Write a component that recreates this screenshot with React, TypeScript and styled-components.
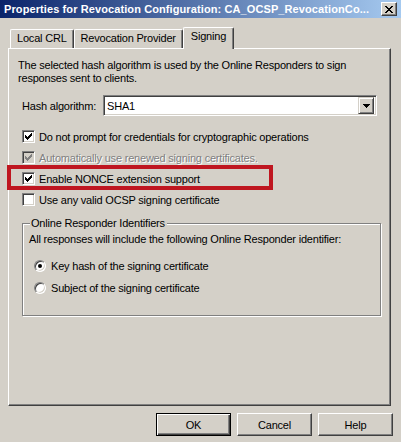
import React from 'react';
import styled, { createGlobalStyle } from 'styled-components';

const GlobalStyle = createGlobalStyle`
    html, body {
        margin: 0;
        padding: 0;
        background: #d4d0c8;
    }
    body {
        font-family: "Liberation Sans", Arial, sans-serif;
        font-size: 11px;
        letter-spacing: -0.2px;
        color: #000;
    }
`;

const CHECK_PIXELS = [
    [6, 0], [5, 1], [6, 1], [0, 2], [4, 2], [5, 2], [6, 2],
    [0, 3], [1, 3], [3, 3], [4, 3], [5, 3],
    [0, 4], [1, 4], [2, 4], [3, 4], [4, 4],
    [1, 5], [2, 5], [3, 5], [2, 6],
];

function CheckMark({ color }: { color: string }) {
    return (
        <svg width="7" height="7" viewBox="0 0 7 7" shapeRendering="crispEdges">
            {CHECK_PIXELS.map(([x, y]) => (
                <rect key={`${x}-${y}`} x={x} y={y} width="1" height="1" fill={color} />
            ))}
        </svg>
    );
}

const Window = styled.div`
    width: 401px;
    height: 442px;
    background: #d4d0c8;
    overflow: hidden;
    display: flex;
    flex-direction: column;
`;

const TitleBar = styled.div`
    height: 18px;
    flex-shrink: 0;
    display: flex;
    align-items: center;
    justify-content: space-between;
    padding: 0 4px 0 4px;
    background: linear-gradient(to right, #0a246a, #a6caf0);
`;

const TitleText = styled.span`
    color: #fff;
    font-weight: bold;
    font-size: 11px;
    letter-spacing: 0.1px;
    white-space: nowrap;
`;

const CloseButton = styled.div`
    width: 16px;
    height: 14px;
    box-sizing: border-box;
    background: #d4d0c8;
    border: 1px solid;
    border-color: #fff #404040 #404040 #fff;
    box-shadow: inset -1px -1px 0 #808080;
    display: flex;
    align-items: center;
    justify-content: center;
`;

const Body = styled.div`
    padding: 9px 8px 0 8px;
    display: flex;
    flex-direction: column;
`;

const TabStrip = styled.div`
    display: flex;
    align-items: flex-end;
    padding-left: 2px;
    height: 21px;
`;

const Tab = styled.div<{ $active?: boolean }>`
    box-sizing: border-box;
    height: ${p => (p.$active ? '22px' : '19px')};
    padding: 0 ${p => (p.$active ? '7px' : '6px')};
    padding-top: 2px;
    border-top: 1px solid #fff;
    border-left: 1px solid #fff;
    border-right: 1px solid #404040;
    box-shadow: inset -1px 0 0 #808080;
    border-radius: 2px 2px 0 0;
    background: #d4d0c8;
    white-space: nowrap;
    position: ${p => (p.$active ? 'relative' : 'static')};
    z-index: ${p => (p.$active ? 1 : 0)};
    margin-bottom: ${p => (p.$active ? '-1px' : '0')};
`;

const Panel = styled.div`
    box-sizing: border-box;
    width: 383px;
    height: 358px;
    border: 1px solid;
    border-color: #fff #404040 #404040 #fff;
    box-shadow: inset -1px -1px 0 #808080;
    padding: 10px 0 0 9px;
    display: flex;
    flex-direction: column;
`;

const Description = styled.p`
    margin: 0;
    line-height: 13px;
    width: 345px;
`;

const HashRow = styled.div`
    display: flex;
    align-items: center;
    margin-top: 10px;
    padding-left: 4px;
`;

const Label = styled.span`
    width: 81px;
`;

const Combo = styled.div`
    box-sizing: border-box;
    width: 274px;
    height: 21px;
    border: 1px solid;
    border-color: #808080 #fff #fff #808080;
    box-shadow: inset 1px 1px 0 #404040, inset -1px -1px 0 #d4d0c8;
    background: #fff;
    display: flex;
    align-items: center;
    justify-content: space-between;
    padding: 0 2px 0 3px;
`;

const DropButton = styled.div`
    box-sizing: border-box;
    width: 16px;
    height: 17px;
    background: #d4d0c8;
    border: 1px solid;
    border-color: #d4d0c8 #404040 #404040 #d4d0c8;
    box-shadow: inset 1px 1px 0 #fff, inset -1px -1px 0 #808080;
    display: flex;
    align-items: center;
    justify-content: center;
`;

const Options = styled.div`
    display: flex;
    flex-direction: column;
    gap: 8px;
    margin-top: 14px;
    padding-left: 4px;
`;

const OptionRow = styled.label`
    display: flex;
    align-items: center;
    gap: 4px;
    height: 13px;
    position: relative;
`;

const Box = styled.span<{ $disabled?: boolean }>`
    box-sizing: border-box;
    width: 13px;
    height: 13px;
    flex-shrink: 0;
    border: 1px solid;
    border-color: #808080 #fff #fff #808080;
    box-shadow: inset 1px 1px 0 #404040, inset -1px -1px 0 #d4d0c8;
    background: ${p => (p.$disabled ? '#d4d0c8' : '#fff')};
    display: flex;
    align-items: center;
    justify-content: center;
`;

const OptionText = styled.span<{ $disabled?: boolean }>`
    white-space: nowrap;
    color: ${p => (p.$disabled ? '#808080' : '#000')};
    text-shadow: ${p => (p.$disabled ? '1px 1px 0 #fff' : 'none')};
`;

const Highlight = styled.div`
    position: absolute;
    left: -15px;
    top: -7px;
    width: 266px;
    height: 25px;
    box-sizing: border-box;
    border: 4px solid #bf1620;
    pointer-events: none;
`;

const Group = styled.div`
    position: relative;
    box-sizing: border-box;
    width: 359px;
    height: 93px;
    margin: 17px 0 0 4px;
    border: 1px solid #808080;
    box-shadow: inset 1px 1px 0 #fff, 1px 1px 0 #fff;
    padding: 9px 0 0 6px;
    display: flex;
    flex-direction: column;
`;

const Legend = styled.span`
    position: absolute;
    top: -7px;
    left: 7px;
    padding: 0 2px 0 1px;
    background: #d4d0c8;
    line-height: 13px;
`;

const GroupText = styled.div`
    line-height: 13px;
`;

const Radios = styled.div`
    display: flex;
    flex-direction: column;
    gap: 9px;
    margin-top: 13px;
    padding-left: 5px;
`;

const RadioRow = styled.label`
    display: flex;
    align-items: center;
    gap: 5px;
    height: 13px;
`;

const Radio = styled.span<{ $on?: boolean }>`
    box-sizing: border-box;
    width: 12px;
    height: 12px;
    flex-shrink: 0;
    border-radius: 50%;
    border: 1px solid;
    border-color: #808080 #fff #fff #808080;
    box-shadow: inset 1px 1px 0 #404040, inset -1px -1px 0 #d4d0c8;
    background: #fff;
    display: flex;
    align-items: center;
    justify-content: center;

    &::after {
        content: '';
        width: 4px;
        height: 4px;
        border-radius: 50%;
        background: ${p => (p.$on ? '#000' : 'transparent')};
    }
`;

const ButtonRow = styled.div`
    display: flex;
    justify-content: flex-end;
    gap: 6px;
    margin-top: 7px;
`;

const Button = styled.div<{ $default?: boolean }>`
    box-sizing: border-box;
    width: 75px;
    height: 23px;
    background: #d4d0c8;
    display: flex;
    align-items: center;
    justify-content: center;
    border: 1px solid;
    border-color: ${p => (p.$default ? '#000' : '#fff #404040 #404040 #fff')};
    box-shadow: ${p =>
        p.$default
            ? 'inset 1px 1px 0 #fff, inset -1px -1px 0 #404040, inset -2px -2px 0 #808080'
            : 'inset -1px -1px 0 #808080'};
`;

const options = [
    { text: 'Do not prompt for credentials for cryptographic operations', checked: true },
    { text: 'Automatically use renewed signing certificates.', checked: true, disabled: true },
    { text: 'Enable NONCE extension support', checked: true, marked: true },
    { text: 'Use any valid OCSP signing certificate', checked: false },
];

export default function App(): JSX.Element {
    return (
        <>
            <GlobalStyle />
            <Window>
                <TitleBar>
                    <TitleText>Properties for Revocation Configuration: CA_OCSP_RevocationCo...</TitleText>
                    <CloseButton>
                        <svg width="8" height="7" viewBox="0 0 8 7" shapeRendering="crispEdges">
                            <path d="M0 0h2v1h-2zM6 0h2v1h-2zM1 1h2v1h-2zM5 1h2v1h-2zM2 2h4v1h-4zM3 3h2v1h-2zM2 4h4v1h-4zM1 5h2v1h-2zM5 5h2v1h-2zM0 6h2v1h-2zM6 6h2v1h-2z" fill="#000" />
                        </svg>
                    </CloseButton>
                </TitleBar>
                <Body>
                    <TabStrip>
                        <Tab>Local CRL</Tab>
                        <Tab>Revocation Provider</Tab>
                        <Tab $active>Signing</Tab>
                    </TabStrip>
                    <Panel>
                        <Description>
                            The selected hash algorithm is used by the Online Responders to sign responses sent to clients.
                        </Description>
                        <HashRow>
                            <Label>Hash algorithm:</Label>
                            <Combo>
                                <span>SHA1</span>
                                <DropButton>
                                    <svg width="7" height="4" viewBox="0 0 7 4" shapeRendering="crispEdges">
                                        <path d="M0 0h7v1h-7zM1 1h5v1h-5zM2 2h3v1h-3zM3 3h1v1h-1z" fill="#000" />
                                    </svg>
                                </DropButton>
                            </Combo>
                        </HashRow>
                        <Options>
                            {options.map(o => (
                                <OptionRow key={o.text}>
                                    {o.marked && <Highlight />}
                                    <Box $disabled={o.disabled}>
                                        {o.checked && <CheckMark color={o.disabled ? '#808080' : '#000'} />}
                                    </Box>
                                    <OptionText $disabled={o.disabled}>{o.text}</OptionText>
                                </OptionRow>
                            ))}
                        </Options>
                        <Group>
                            <Legend>Online Responder Identifiers</Legend>
                            <GroupText>All responses will include the following Online Responder identifier:</GroupText>
                            <Radios>
                                <RadioRow>
                                    <Radio $on />
                                    <span>Key hash of the signing certificate</span>
                                </RadioRow>
                                <RadioRow>
                                    <Radio />
                                    <span>Subject of the signing certificate</span>
                                </RadioRow>
                            </Radios>
                        </Group>
                    </Panel>
                    <ButtonRow>
                        <Button $default>OK</Button>
                        <Button>Cancel</Button>
                        <Button>Help</Button>
                    </ButtonRow>
                </Body>
            </Window>
        </>
    );
}
